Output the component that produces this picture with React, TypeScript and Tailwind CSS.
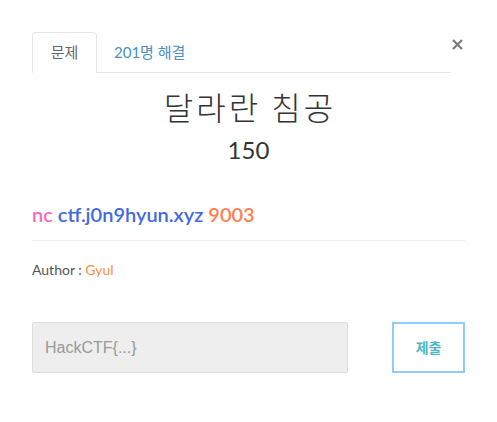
import React from "react";

export default function App() {
  return (
    <div className="w-[497px] h-[422px] bg-white relative" style={{ fontFamily: "Lato, 'Noto Sans CJK KR', sans-serif" }}>
      <svg className="absolute left-[452px] top-[39px]" width="11" height="11" viewBox="0 0 11 11">
        <path d="M1 1 L10 10 M10 1 L1 10" stroke="#7a7a7a" strokeWidth="2.2" strokeLinecap="butt" />
      </svg>
      <div className="pt-[32px] px-[32px]">
        <div className="flex w-[419px] border-b border-[#e6e6e6] h-[41px]">
          <div className="w-[65px] h-[41px] border border-[#e6e6e6] border-b-white rounded-t-[4px] flex items-center justify-center text-[15px] text-[#666] bg-white -mb-px">
            문제
          </div>
          <div className="pl-[17px] flex items-center text-[15px] text-[#4a8fc9]">201명 해결</div>
        </div>
        <div className="text-center mt-[13px]">
          <div className="text-[32px] leading-[40px] text-[#333] tracking-[3px] pl-[3px]" style={{ fontFamily: "'Noto Sans CJK KR', sans-serif", fontWeight: 300 }}>
            달라란 침공
          </div>
          <div className="mt-[8px] text-[24px] leading-[32px] text-[#333]" style={{ fontFamily: "Lato, sans-serif" }}>
            150
          </div>
        </div>
        <div className="mt-[36px] text-[20px] leading-[24px] font-semibold">
          <span className="text-[#ff69b4]">nc</span> <span className="text-[#4169e1]">ctf.j0n9hyun.xyz</span>{" "}
          <span className="text-[#ff7f50]">9003</span>
        </div>
        <div className="mt-[14px] h-0 border-t border-[#eeeeee] w-[433px]" />
        <div className="mt-[20px] text-[14px] leading-[18px] text-[#555]">
          Author : <span className="text-[#ff8c42]">Gyul</span>
        </div>
        <div className="mt-[43px] flex items-center">
          <div className="w-[317px] h-[51px] bg-[#eeeeee] border border-[#dcdcdc] rounded-[2px] flex items-center pl-[12px] text-[16px] text-[#999]" style={{ fontFamily: "'Liberation Sans', sans-serif" }}>
            HackCTF{"{...}"}
          </div>
          <div className="ml-[44px] w-[73px] h-[51px] border-2 border-[#8fcbfb] flex items-center justify-center text-[14px] font-bold text-[#4fb6c9]" style={{ fontFamily: "'Noto Sans CJK KR', sans-serif" }}>
            제출
          </div>
        </div>
      </div>
    </div>
  );
}
